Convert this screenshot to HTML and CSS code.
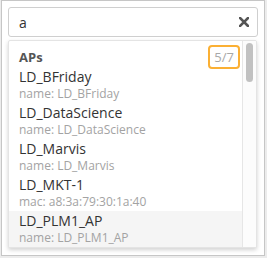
FILE: index.html
```html
<!DOCTYPE html>
<html lang="en">

<head>
    <meta charset="UTF-8">
    <meta name="viewport" content="width=device-width, initial-scale=1.0">
    <title>AP Search</title>
    <link rel="stylesheet" href="styles.css">
</head>

<body>
    <div class="panel">
        <div class="search">
            <span class="query">a</span>
            <span class="clear">
                <svg width="10" height="10" viewBox="0 0 10 10">
                    <path d="M1 1 L9 9 M9 1 L1 9" stroke="#555" stroke-width="2.6" stroke-linecap="square" fill="none" />
                </svg>
            </span>
        </div>
        <div class="dropdown">
            <div class="list">
                <div class="group-head">
                    <span class="group-name">APs</span>
                    <span class="count">5/7</span>
                </div>
                <div class="item">
                    <div class="title">LD_BFriday</div>
                    <div class="sub">name: LD_BFriday</div>
                </div>
                <div class="item">
                    <div class="title">LD_DataScience</div>
                    <div class="sub">name: LD_DataScience</div>
                </div>
                <div class="item">
                    <div class="title">LD_Marvis</div>
                    <div class="sub">name: LD_Marvis</div>
                </div>
                <div class="item">
                    <div class="title">LD_MKT-1</div>
                    <div class="sub">mac: a8:3a:79:30:1a:40</div>
                </div>
                <div class="item active">
                    <div class="title">LD_PLM1_AP</div>
                    <div class="sub">name: LD_PLM1_AP</div>
                </div>
            </div>
            <div class="scrollbar">
                <div class="thumb"></div>
            </div>
        </div>
    </div>
</body>

</html>
```

FILE: styles.css
```css
body {
    margin: 0;
    background-color: #ececec;
    font-family: 'Open Sans', 'Liberation Sans', sans-serif;
}

.panel {
    box-sizing: border-box;
    width: 264px;
    height: 256px;
    margin-left: 1px;
    padding: 6px;
    border: 1px solid #c6c6c6;
    background-color: #fff;
}

.search {
    display: flex;
    align-items: center;
    justify-content: space-between;
    box-sizing: border-box;
    height: 30px;
    padding: 0 8px 0 10px;
    border: 1px solid #cfcfcf;
    border-radius: 3px;
}

.query {
    font-size: 14px;
    color: #333;
}

.clear {
    display: flex;
}

.dropdown {
    display: flex;
    box-sizing: border-box;
    height: 208px;
    margin: 3px 1px 0 0;
    border: 1px solid #e4e4e4;
    border-radius: 2px;
    background-color: #fff;
    box-shadow: 0 2px 4px rgba(0, 0, 0, 0.18);
    overflow: hidden;
}

.list {
    flex: 1;
}

.group-head {
    display: flex;
    align-items: baseline;
    justify-content: space-between;
    box-sizing: border-box;
    height: 26px;
    padding: 4px 2px 0 10px;
}

.group-name {
    font-size: 13px;
    font-weight: bold;
    color: #555;
}

.count {
    padding: 0 4px;
    border: 2px solid #fbb034;
    border-radius: 4px;
    font-size: 13px;
    line-height: 20px;
    color: #a8a8a8;
}

.item {
    padding: 1px 10px;
}

.item.active {
    background-color: #f5f5f5;
}

.title {
    font-size: 14px;
    line-height: 18px;
    color: #333;
}

.sub {
    font-size: 12px;
    line-height: 16px;
    color: #a3a3a3;
}

.scrollbar {
    width: 13px;
    border-left: 1px solid #e6e6e6;
    background-color: #fcfcfc;
}

.thumb {
    width: 7px;
    height: 39px;
    margin: 2px 0 0 3px;
    border-radius: 4px;
    background-color: #c1c1c1;
}
```
